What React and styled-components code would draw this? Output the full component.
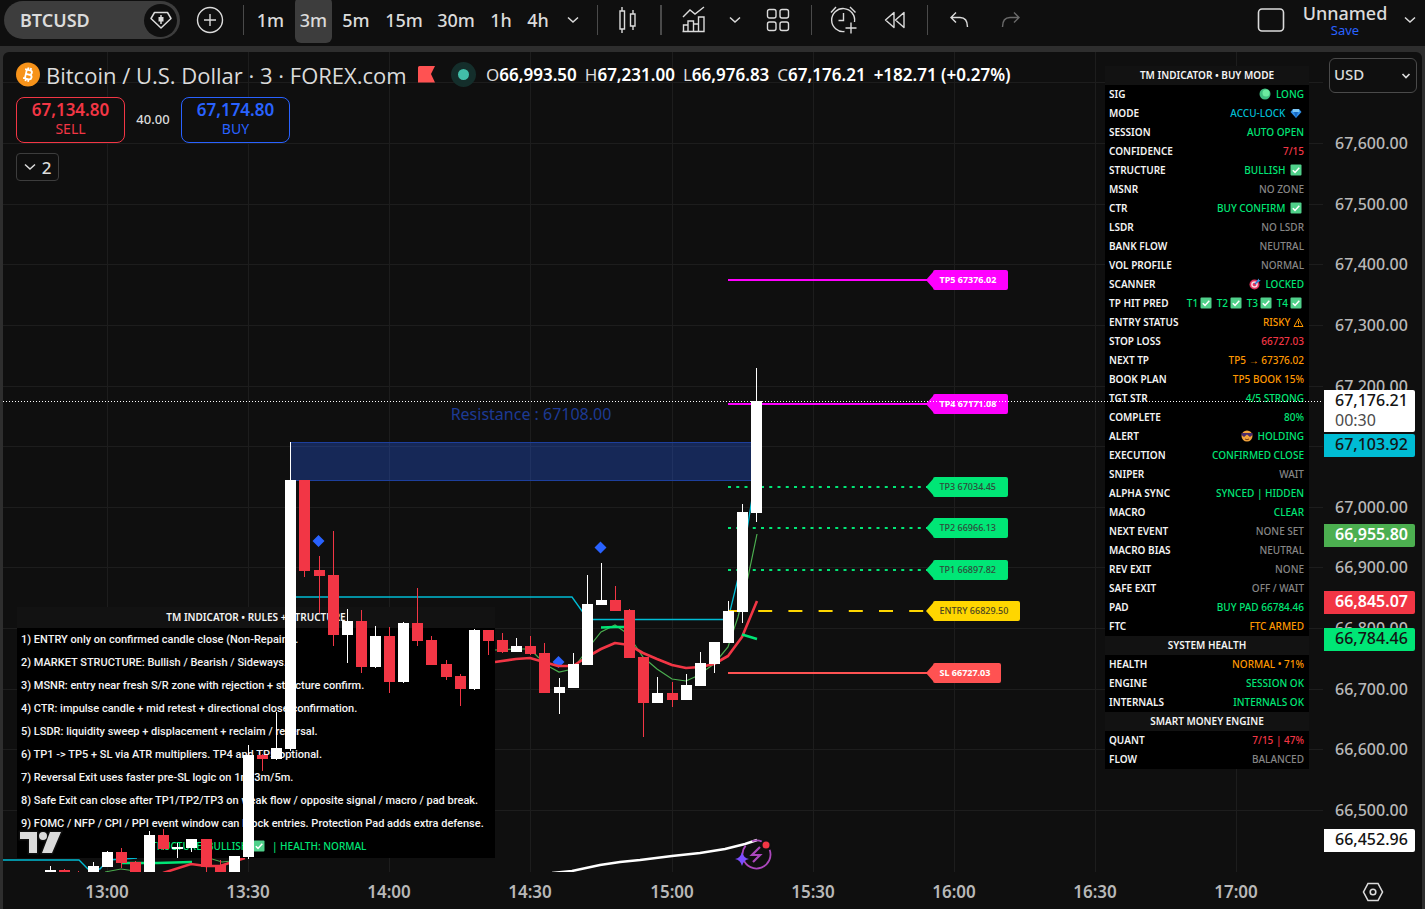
import React from "react";
import styled, { createGlobalStyle } from "styled-components";

const c = {
  bg: "#0f0f0f",
  frame: "#2e2e2e",
  hover: "#3d3d3d",
  text: "#dbdbdb",
  axis: "#b8b8b8",
  grid: "#1d1d1d",
  red: "#f23645",
  blue: "#2962ff",
  cyan: "#00bcd4",
  green: "#00e676",
  leaf: "#4caf50",
  orange: "#ff9800",
  magenta: "#ff00ff",
  yellow: "#ffd600",
  sl: "#ff5252",
  grey: "#787b86",
};

const Global = createGlobalStyle`
  * { box-sizing: border-box; }
  body {
    margin: 0;
    background: ${c.frame};
    color: ${c.text};
    font-family: "Noto Sans", "Open Sans", sans-serif;
  }
  button, select { font-family: inherit; color: inherit; }
`;

/* ---------- page frame ---------- */

const Page = styled.div`
  display: flex;
  flex-direction: column;
  min-height: 100vh;
`;

const Toolbar = styled.header`
  display: flex;
  align-items: center;
  height: 46px;
  padding: 0 0 6px 4px;
  background: ${c.bg};
`;

const SymbolPill = styled.div`
  display: flex;
  align-items: center;
  justify-content: space-between;
  width: 176px;
  height: 38px;
  padding: 0 3px 0 16px;
  border-radius: 19px;
  background: ${c.hover};
`;

const SymbolButton = styled.button`
  padding: 0;
  border: 0;
  background: none;
  font-size: 18px;
  font-weight: 600;
  line-height: 24px;
`;

const RoundButton = styled.button`
  display: grid;
  place-items: center;
  width: 33px;
  height: 33px;
  padding: 0;
  border: 0;
  border-radius: 50%;
  background: ${c.bg};
`;

const ToolButton = styled.button`
  display: grid;
  place-items: center;
  flex: none;
  width: ${(p) => p.$w}px;
  height: ${(p) => (p.$active ? 46 : 38)}px;
  padding: 0;
  border: 0;
  border-radius: 6px;
  background: ${(p) => (p.$active ? c.hover : "transparent")};
  color: ${(p) => (p.$dim ? "#6a6a6a" : c.text)};
  font-size: 18px;
  font-weight: 500;
  white-space: nowrap;
`;

const Separator = styled.span`
  flex: none;
  width: ${(p) => p.$w}px;
  height: 30px;
  background: linear-gradient(#4a4a4a, #4a4a4a) center / ${(p) => (p.$bold ? 2 : 1)}px 100% no-repeat;
`;

const Spacer = styled.span`
  flex: 1;
`;

const LayoutName = styled.div`
  display: flex;
  flex-direction: column;
  align-items: center;
  width: 100px;
  font-size: 18px;
  font-weight: 500;
  line-height: 20px;
`;

const SaveButton = styled.button`
  padding: 0;
  border: 0;
  background: none;
  color: ${c.blue};
  font-size: 13px;
  line-height: 14px;
`;

const Panel = styled.main`
  display: grid;
  flex: 1;
  grid-template-columns: minmax(0, 1fr) 99px;
  grid-template-rows: minmax(820px, 1fr) 37px;
  margin: 6px 3px 0;
  border-radius: 6px 6px 0 0;
  background: ${c.bg};
  overflow: hidden;
`;

/* ---------- plot layers ---------- */

const Plot = styled.div`
  display: grid;
  grid-template: minmax(0, 1fr) / minmax(0, 1fr);
  overflow: hidden;
  > * {
    grid-area: 1 / 1;
  }
`;

const Layer = styled.svg`
  width: 100%;
  height: 820px;
  pointer-events: none;
  font-family: inherit;
`;

const Legend = styled.div`
  display: flex;
  flex-direction: column;
  align-self: start;
  align-items: flex-start;
  gap: 10px;
  padding: 10px 0 0 13px;
`;

const TitleRow = styled.div`
  display: flex;
  align-items: center;
  height: 25px;
  white-space: nowrap;
`;

const Title = styled.h1`
  margin: 0 16px 0 6px;
  width: 356px;
  font-family: "Open Sans", "Noto Sans", sans-serif;
  font-size: 22px;
  font-weight: 400;
  line-height: 24px;
`;

const Ohlc = styled.div`
  display: flex;
  gap: 8px;
  margin-left: 10px;
  color: #fff;
  font-size: 17px;
  font-weight: 600;
  line-height: 24px;
`;

const OhlcKey = styled.span`
  color: ${c.text};
  font-weight: 400;
`;

const Status = styled.span`
  width: 25px;
  height: 25px;
  margin-left: 16px;
  border: 7px solid #142e2b;
  border-radius: 50%;
  background: #42bda8;
`;

const TradeRow = styled.div`
  display: flex;
  align-items: center;
`;

const TradeButton = styled.button`
  display: flex;
  flex-direction: column;
  align-items: center;
  justify-content: center;
  width: 109px;
  height: 46px;
  padding: 0 0 2px;
  border: 1px solid ${(p) => p.$color};
  border-radius: 8px;
  background: ${c.bg};
  color: ${(p) => p.$color};
  font-size: 14px;
  line-height: 19px;
  strong {
    font-size: 17px;
    font-weight: 600;
  }
`;

const Spread = styled.span`
  width: 56px;
  padding-bottom: 2px;
  font-size: 13px;
  font-weight: 500;
  text-align: center;
`;

const CountButton = styled.button`
  display: flex;
  align-items: center;
  justify-content: center;
  gap: 6px;
  width: 43px;
  height: 28px;
  padding: 0;
  border: 1px solid #3d3d3d;
  border-radius: 4px;
  background: ${c.bg};
  font-size: 17px;
  font-weight: 500;
`;

const StatsTable = styled.table`
  justify-self: end;
  align-self: start;
  width: 204px;
  margin: 14px 14px 0 0;
  border-collapse: collapse;
  background: #000;
  font-size: 10px;
  line-height: 19px;
  white-space: nowrap;
`;

const GroupHead = styled.th`
  height: 19px;
  padding: 0;
  background: #121212;
  color: #f4f4f4;
  font-weight: 600;
`;

const StatName = styled.th`
  height: 19px;
  padding: 0 0 0 4px;
  color: #f4f4f4;
  font-weight: 600;
  text-align: left;
`;

const StatValue = styled.td`
  height: 19px;
  padding: 0 5px 0 0;
  color: ${(p) => p.$color};
  font-weight: 500;
  text-align: right;
  svg {
    margin: 0 2px;
    vertical-align: -2px;
  }
`;

const Rules = styled.section`
  justify-self: start;
  align-self: start;
  width: 478px;
  margin: 555px 0 0 14px;
  background: #000;
  color: #f4f4f4;
  font-size: 11px;
  font-weight: 500;
  line-height: 23px;
  white-space: nowrap;
`;

const RulesHead = styled.h2`
  margin: 0;
  background: #121212;
  font-size: 10px;
  font-weight: 600;
  line-height: 21px;
  text-align: center;
`;

const RulesList = styled.ul`
  margin: 0;
  padding: 0 4px;
  font-family: Roboto, "Noto Sans", sans-serif;
  list-style: none;
`;

const RulesFoot = styled.p`
  margin: 0;
  color: ${c.green};
  font-size: 10px;
  text-align: center;
  svg {
    margin: 0 2px;
    vertical-align: -2px;
  }
`;

/* ---------- axes ---------- */

const PriceAxis = styled.aside`
  position: relative;
`;

const CurrencyBox = styled.label`
  display: grid;
  align-items: center;
  width: 88px;
  height: 35px;
  margin: 6px 0 0 6px;
  border: 1px solid #4a4a4a;
  border-radius: 6px;
  > * {
    grid-area: 1 / 1;
  }
  svg {
    justify-self: end;
    margin-right: 4px;
    pointer-events: none;
  }
`;

const CurrencySelect = styled.select`
  width: 100%;
  height: 100%;
  padding: 0 4px 4px;
  border: 0;
  appearance: none;
  background: transparent;
  font-size: 15px;
  font-weight: 500;
`;

const Tick = styled.span`
  position: absolute;
  left: 12px;
  margin-top: -13px;
  color: ${c.axis};
  font-size: 16px;
  font-weight: 500;
  line-height: 24px;
`;

const Badge = styled.div`
  position: absolute;
  left: 1px;
  width: 91px;
  margin-top: -11px;
  padding: 0 0 2px 11px;
  border-radius: 0 2px 2px 0;
  background: ${(p) => p.$bg};
  color: ${(p) => p.$fg};
  font-size: 16px;
  font-weight: ${(p) => (p.$fg === "#fff" ? 600 : 500)};
  line-height: ${(p) => (p.$tall ? 20 : 21)}px;
`;

const Countdown = styled.div`
  color: #4a4a4a;
  font-weight: 400;
`;

const TimeAxis = styled.footer`
  position: relative;
  overflow: hidden;
`;

const TimeTick = styled.span`
  position: absolute;
  top: 8px;
  width: 60px;
  margin-left: -30px;
  color: ${c.axis};
  font-size: 17px;
  font-weight: 600;
  line-height: 24px;
  text-align: center;
`;

const Corner = styled.button`
  display: grid;
  place-items: center;
  padding: 0;
  height: 40px;
  border: 0;
  background: none;
`;

/* ---------- icons ---------- */

const Svg = ({ w, h = w, children, sw = 1.4, ...rest }) => (
  <svg width={w} height={h} viewBox={`0 0 ${w} ${h}`} fill="none" stroke="currentColor" strokeWidth={sw} aria-hidden="true" {...rest}>
    {children}
  </svg>
);

const Chevron = () => (
  <Svg w={12} h={8} sw={1.5}><path d="M1 1.500 6 6l5-4.500" /></Svg>
);
const DiamondIcon = () => (
  <Svg w={24} h={20} sw={1.5}>
    <path d="M5.500 2.500h13l3.500 6L12 18 2 8.500z" strokeLinejoin="round" />
    <path d="M12 5v9" /><path d="M9.500 7h5v4.500h-5z" fill="currentColor" stroke="none" />
  </Svg>
);
const PlusIcon = () => (
  <Svg w={28}><circle cx="14" cy="14" r="12.500" /><path d="M8 14h12M14 8v12" /></Svg>
);
const CandlesIcon = () => (
  <Svg w={20} h={28}><path d="M4 1v4M4 23v4M2 5h4.500v18H2zM15 4v4M15 20v4M12.500 8H17v12h-4.500z" /></Svg>
);
const IndicatorsIcon = () => (
  <Svg w={26} h={28}>
    <path d="M2 11l7-7 5 4 9-7" />
    <path d="M2.500 25.500V19H7v6.500M7 25.500V15h5.500v10.500M12.500 25.500V18h5v7.500M17.500 25.500V11H23v14.500zM1.500 25.500h22" />
  </Svg>
);
const LayoutsIcon = () => (
  <Svg w={24}>
    {[[1.5, 1.5], [14, 1.5], [1.5, 14], [14, 14]].map(([x, y]) => (
      <rect key={`${x}-${y}`} x={x} y={y} width="8.500" height="8.500" rx="2" />
    ))}
  </Svg>
);
const AlarmIcon = () => (
  <Svg w={30}>
    <path d="M15.500 26.500A11.500 11.500 0 1 1 25.500 17" />
    <path d="M9.500 15.500h5V8M2 7.500 7 2M21 2l5.500 5.500M22 17.500v11M16.500 23h11" />
  </Svg>
);
const RewindIcon = () => (
  <Svg w={22} h={18}><path d="M10 1.500v15L1.500 9zM20 1.500v15L11.500 9z" strokeLinejoin="round" /></Svg>
);
const UndoIcon = ({ flip }) => (
  <Svg w={20} h={18} transform={flip ? "scale(-1 1)" : undefined}>
    <path d="M7 1.500 2 6.500l5 5M2 6.500h9c5 0 7.500 4 7.500 9.500" />
  </Svg>
);
const FrameIcon = () => (
  <Svg w={28} h={26} sw={1.6}><rect x="1.500" y="2" width="25" height="22" rx="3.500" /></Svg>
);
const HexIcon = () => (
  <Svg w={22} h={20} sw={1.6}><path d="M6 1.500h10L20.500 10 16 18.500H6L1.500 10z" /><circle cx="11" cy="10" r="2.800" /></Svg>
);
const BitcoinIcon = () => (
  <svg width="24" height="25" viewBox="0 0 24 24" aria-hidden="true">
    <circle cx="12" cy="12" r="12" fill="#f7931a" />
    <g transform="rotate(13 12 12)" fill="none" stroke="#fff">
      <path d="M8 7.500h5.200a2.200 2.200 0 0 1 0 4.400H9.800M9.800 7.500v9M9.800 11.900h4a2.300 2.300 0 0 1 0 4.600H8M11 5v2.500M13.600 5v2.500M11 16.500V19M13.600 16.500V19" strokeWidth="1.800" />
    </g>
  </svg>
);
const FlagIcon = () => (
  <svg width="17" height="17" viewBox="0 0 17 17" aria-hidden="true"><path d="M1.500 0H17l-4 8 4 8.500H0V1.500Q0 0 1.500 0z" fill="#ff5252" /></svg>
);

const Check = () => (
  <svg width="12" height="12" viewBox="0 0 12 12" role="img" aria-label="yes">
    <rect x="0.500" y="0.500" width="11" height="11" rx="1" fill="#4fd08a" />
    <path d="M2.800 6.200 5 8.400l4.300-4.700" fill="none" stroke="#fff" strokeWidth="1.500" />
  </svg>
);
const Dot = () => (
  <svg width="12" height="12" viewBox="0 0 12 12" role="img" aria-label="green">
    <circle cx="6" cy="6" r="5.500" fill="#3fbf80" /><circle cx="7" cy="5" r="3.500" fill="#6bea9f" />
  </svg>
);
const Gem = () => (
  <svg width="12" height="12" viewBox="0 0 12 12" role="img" aria-label="gem">
    <path d="M3 2h6l2.500 3L6 11 .5 5z" fill="#2f8fe8" /><path d="M3 2h6l.5 3h-7z" fill="#7cc7f5" /><path d="M4 5h4l-2 6z" fill="#1668c4" />
  </svg>
);
const Target = () => (
  <svg width="12" height="12" viewBox="0 0 12 12" role="img" aria-label="target">
    <circle cx="5.500" cy="6.500" r="5" fill="#e0315c" /><circle cx="5.500" cy="6.500" r="3.300" fill="#f5d5de" />
    <circle cx="5.500" cy="6.500" r="1.800" fill="#e0315c" /><path d="M6 6l4-4" stroke="#1d7fd6" strokeWidth="1.500" /><path d="M8 3l1.500-2.500L10 2l1.800.5L9.500 4z" fill="#3d9bea" />
  </svg>
);
const Cool = () => (
  <svg width="12" height="12" viewBox="0 0 12 12" role="img" aria-label="cool">
    <circle cx="6" cy="6" r="5.500" fill="#f2a33c" /><path d="M.5 3h11v2L9 7 6 4.500 3 7 .5 5z" fill="#4a2b6b" /><path d="M4 9q2 1.500 4 0" stroke="#7a3b12" fill="none" />
  </svg>
);
const WarnIcon = styled.svg`
  && {
    margin: 0;
  }
`;
const Warn = () => (
  <WarnIcon width="11" height="11" viewBox="0 0 11 11" fill="none" stroke="currentColor" role="img" aria-label="warning">
    <path d="M5.500 1.500 10 9.500H1zM5.500 4v3M5.500 7.800v1" />
  </WarnIcon>
);

/* ---------- data ---------- */

const LEFT = 3;
const TOP = 52;
const yOf = (price) => 144 + (67600 - price) * 0.6064;
const times = ["13:00", "13:30", "14:00", "14:30", "15:00", "15:30", "16:00", "16:30", "17:00"];
const timeX = (i) => Math.round(107 + i * 141.15);
const prices = [67600, 67500, 67400, 67300, 67200, 67100, 67000, 66900, 66800, 66700, 66600, 66500];
const fmt = (n) => n.toLocaleString("en-US", { minimumFractionDigits: 2 });

// x, up, body top, body bottom, wick top, wick bottom
const candles = [
  [50, 1, 870, 874, 866, 874], [64, 0, 870, 874, 869, 874], [78, 0, 872, 874, 871, 874],
  [93, 1, 866, 874, 862, 874], [107, 1, 852, 867, 851, 867], [121, 0, 852, 863, 848, 868],
  [135, 0, 862, 874, 861, 874], [149, 1, 835, 874, 831, 874], [163, 0, 835, 849, 829, 850],
  [177, 1, 847, 849, 843, 858], [191, 1, 839, 848, 839, 852], [206, 0, 839, 867, 839, 874],
  [220, 0, 865, 874, 860, 874], [234, 1, 856, 874, 856, 874], [248, 1, 755, 857, 745, 859],
  [262, 0, 755, 759, 754, 771], [276, 1, 748, 759, 712, 760], [290, 1, 480, 749, 442, 751],
  [304, 0, 480, 571, 480, 577], [319, 0, 570, 576, 556, 613], [333, 0, 575, 635, 531, 646],
  [347, 1, 621, 635, 609, 663], [361, 0, 621, 667, 610, 673], [375, 1, 636, 667, 626, 668],
  [389, 0, 636, 682, 627, 693], [403, 1, 623, 682, 622, 683], [417, 0, 623, 641, 588, 646],
  [431, 0, 640, 665, 636, 665], [446, 0, 664, 677, 660, 680], [460, 0, 676, 689, 674, 706],
  [474, 1, 630, 689, 629, 690], [488, 0, 630, 641, 630, 655], [502, 0, 640, 652, 633, 653],
  [516, 1, 646, 652, 638, 652], [530, 0, 646, 654, 636, 655], [544, 0, 653, 693, 643, 693],
  [559, 1, 687, 693, 678, 714], [573, 1, 664, 688, 653, 688], [587, 1, 604, 665, 575, 665],
  [601, 1, 600, 605, 563, 605], [615, 0, 600, 611, 586, 611], [629, 0, 610, 658, 609, 658],
  [643, 0, 657, 703, 657, 737], [657, 1, 693, 703, 677, 703], [672, 0, 693, 700, 682, 707],
  [686, 1, 685, 700, 674, 700], [700, 1, 663, 686, 652, 686], [714, 1, 642, 664, 642, 673],
  [728, 1, 611, 643, 601, 643], [742, 1, 512, 612, 504, 623], [756, 1, 401, 513, 368, 522],
];

// label, y, colour, label width, text colour, dash pattern
const levels = [
  ["TP5 67376.02", 280, c.magenta, 75, "#fff", null],
  ["TP4 67171.08", 404, c.magenta, 75, "#fff", null],
  ["TP3 67034.45", 487, c.green, 75, "#2f4a3b", "3 5.250"],
  ["TP2 66966.13", 528, c.green, 75, "#2f4a3b", "3 5.250"],
  ["TP1 66897.82", 570, c.green, 75, "#2f4a3b", "3 5.250"],
  ["ENTRY 66829.50", 611, c.yellow, 87, "#4a4420", "14 16.200"],
  ["SL 66727.03", 673, c.sl, 68, "#fff", null],
];

const badges = [
  [67103.92, c.cyan, "#131313"],
  [66955.8, c.leaf, "#fff"],
  [66845.07, c.red, "#fff"],
  [66784.46, c.green, "#131313"],
  [66452.96, "#fff", "#131313"],
];

const G = c.green, O = c.orange, R = c.red, N = "#868686";
const stats = [
  { title: "TM INDICATOR • BUY MODE" },
  ["SIG", <><Dot /> LONG</>, G], ["MODE", <>ACCU-LOCK <Gem /></>, c.cyan], ["SESSION", "AUTO OPEN", G],
  ["CONFIDENCE", "7/15", R], ["STRUCTURE", <>BULLISH <Check /></>, G], ["MSNR", "NO ZONE", N],
  ["CTR", <>BUY CONFIRM <Check /></>, G], ["LSDR", "NO LSDR", N], ["BANK FLOW", "NEUTRAL", N],
  ["VOL PROFILE", "NORMAL", N], ["SCANNER", <><Target /> LOCKED</>, G],
  ["TP HIT PRED", <>T1<Check /> T2<Check /> T3<Check /> T4<Check /></>, G],
  ["ENTRY STATUS", <>RISKY <Warn /></>, O], ["STOP LOSS", "66727.03", R], ["NEXT TP", "TP5 → 67376.02", O],
  ["BOOK PLAN", "TP5 BOOK 15%", O], ["TGT STR", "4/5 STRONG", G], ["COMPLETE", "80%", G],
  ["ALERT", <><Cool /> HOLDING</>, G], ["EXECUTION", "CONFIRMED CLOSE", G], ["SNIPER", "WAIT", N],
  ["ALPHA SYNC", "SYNCED | HIDDEN", G], ["MACRO", "CLEAR", G], ["NEXT EVENT", "NONE SET", N],
  ["MACRO BIAS", "NEUTRAL", N], ["REV EXIT", "NONE", N], ["SAFE EXIT", "OFF / WAIT", N],
  ["PAD", "BUY PAD 66784.46", G], ["FTC", "FTC ARMED", O],
  { title: "SYSTEM HEALTH" },
  ["HEALTH", "NORMAL • 71%", O], ["ENGINE", "SESSION OK", G], ["INTERNALS", "INTERNALS OK", G],
  { title: "SMART MONEY ENGINE" },
  ["QUANT", "7/15 | 47%", R], ["FLOW", "BALANCED", N],
];

const rules = [
  "1) ENTRY only on confirmed candle close (Non-Repaint).",
  "2) MARKET STRUCTURE: Bullish / Bearish / Sideways.",
  "3) MSNR: entry near fresh S/R zone with rejection + structure confirm.",
  "4) CTR: impulse candle + mid retest + directional close confirmation.",
  "5) LSDR: liquidity sweep + displacement + reclaim / reversal.",
  "6) TP1 -> TP5 + SL via ATR multipliers. TP4 and TP5 optional.",
  "7) Reversal Exit uses faster pre-SL logic on 1m/3m/5m.",
  "8) Safe Exit can close after TP1/TP2/TP3 on weak flow / opposite signal / macro / pad break.",
  "9) FOMC / NFP / CPI / PPI event window can block entries. Protection Pad adds extra defense.",
];

/* ---------- chart layers ---------- */

const Studies = () => (
  <Layer aria-hidden="true">
    <g transform={`translate(${-LEFT} ${-TOP})`} fill="none">
      <g stroke={c.grid}>
        {[67700, ...prices].map((p) => {
          const y = Math.round(yOf(p)) - 0.5;
          return <line key={p} x1="3" x2="4000" y1={y} y2={y} />;
        })}
        {times.map((t, i) => <line key={t} x1={timeX(i) + 0.5} x2={timeX(i) + 0.5} y1="52" y2="872" />)}
      </g>
      <rect x="290.500" y="442.500" width="466" height="38" fill="#2962ff" fillOpacity="0.3" stroke="#1d3f9c" />
      <path d="M295 597H572l16 22.500H728L742 562l15-95" stroke={c.cyan} strokeWidth="1.300" />
      <path d="M3 860H79l9 9h12l8-9 29-2" stroke={c.cyan} strokeWidth="1.300" />
      <path d="M105 872l16-3 14 2M212 859l10 3 18-2" stroke={c.leaf} />
      <path d="M122 863h35l35-1" stroke={c.green} strokeWidth="2.500" />
      <path d="M163 873l28-9 15 2h14l25-8" stroke={c.red} strokeWidth="2.500" />
      <path d="M552 873l20-2 28-6 20-3 20-2 32-4 28-3 25-4 20-5 12-4" stroke="#fff" strokeWidth="2.500" />
      <path d="M558.500 656l6 6-6 6-6-6z" fill={c.blue} />
      <path d="M495 650l21-1h14l8 8 10 9 11 6 14-3 20-27 8-10 14-7 10 7 10 13 8 12 14 12 15 10 14 2 11-5 17-12 14-17 10-30 10-40 9-43" stroke={c.leaf} strokeWidth="1.200" />
      <path d="M495 662l21-3 14-1 14 4 14 4 15 0 14-9 14-8 14-6 14 2 14 8 14 6 15 6 14 3 14-1 14-3 14-8 14-19 15-36" stroke={c.red} strokeWidth="2.600" strokeLinejoin="round" />
      <path d="M601 627.500l14-.5h12M742 634.500l15 4.500" stroke={c.green} strokeWidth="2.500" />
      <path d="M318.500 535l6 6-6 6-6-6zM600.500 541.500l6 6-6 6-6-6z" fill={c.blue} />
      {levels.map(([name, y, color, , , dash]) => (
        <line key={name} x1="728" x2="927" y1={y} y2={y} stroke={color} strokeWidth="2" strokeDasharray={dash || undefined} />
      ))}
      <text x="531" y="420" fill="#1d3a94" fontSize="16" textAnchor="middle">Resistance : 67108.00</text>
    </g>
  </Layer>
);

const Candles = () => (
  <Layer role="img" aria-label="BTCUSD candles">
    <g transform={`translate(${-LEFT} ${-TOP})`}>
      <path d="M20 832h17v21h-8v-14h-9zM39 836a4 4 0 1 1 8 0 4 4 0 0 1-8 0zM50 832h11l-9 21H42z" fill="#dbdbdb" stroke={c.bg} strokeWidth="3" paintOrder="stroke" />
      {candles.map(([x, up, bt, bb, wt, wb]) => (
        <g key={x} fill={up ? "#fff" : c.red}>
          <rect x={x} y={wt} width="1" height={wb - wt} />
          <rect x={x - 5} y={bt} width="11" height={bb - bt} />
        </g>
      ))}
      {levels.map(([name, y, color, w, fg]) => (
        <g key={name}>
          <path d={`M926 ${y}l7-8q0-2 2-2h${w - 4}q2 0 2 2v16q0 2-2 2h${4 - w}q-2 0-2-2z`} fill={color} />
          <text x="939.500" y={y + 3} fill={fg} fontSize="9" fontWeight={fg === "#fff" ? 700 : 500}>{name}</text>
        </g>
      ))}
      <line x1="3" x2="4000" y1="401.500" y2="401.500" stroke="#fff" strokeDasharray="1 2" />
      <g fill="none" stroke="#ab47bc" strokeWidth="1.800">
        <circle cx="756.500" cy="854.500" r="14" strokeDasharray="58 8 10 12" transform="rotate(-20 756.500 854.500)" />
        <path d="M760 847l-8 8h8l-7 7" strokeWidth="2.200" />
      </g>
      <circle cx="766" cy="845" r="5.500" fill={c.bg} />
      <circle cx="766" cy="845" r="3.500" fill={c.red} />
      <path d="M742 852q1.500 6 7 7-5.500 1-7 7-1.500-6-7-7 5.500-1 7-7z" fill="#7c4dff" />
    </g>
  </Layer>
);

const Intervals = [["1m", 49], ["3m", 37, true], ["5m", 48], ["15m", 48], ["30m", 56], ["1h", 34], ["4h", 40]];

export default function App() {
  return (
    <Page>
      <Global />
      <Toolbar>
        <SymbolPill>
          <SymbolButton>BTCUSD</SymbolButton>
          <RoundButton aria-label="Chart type"><DiamondIcon /></RoundButton>
        </SymbolPill>
        <ToolButton $w={60} aria-label="Add symbol"><PlusIcon /></ToolButton>
        <Separator $w={6} />
        {Intervals.map(([label, w, active]) => (
          <ToolButton key={label} $w={w} $active={active}>{label}</ToolButton>
        ))}
        <ToolButton $w={30} aria-label="More intervals"><Chevron /></ToolButton>
        <Separator $w={18} />
        <ToolButton $w={44} aria-label="Candles"><CandlesIcon /></ToolButton>
        <Separator $w={22} $bold />
        <ToolButton $w={44} aria-label="Indicators"><IndicatorsIcon /></ToolButton>
        <ToolButton $w={38} aria-label="Favourites"><Chevron /></ToolButton>
        <ToolButton $w={48} aria-label="Layouts"><LayoutsIcon /></ToolButton>
        <Separator $w={18} />
        <ToolButton $w={48} aria-label="Create alert"><AlarmIcon /></ToolButton>
        <ToolButton $w={54} aria-label="Replay"><RewindIcon /></ToolButton>
        <Separator $w={10} />
        <ToolButton $w={54} aria-label="Undo"><UndoIcon /></ToolButton>
        <ToolButton $w={50} $dim aria-label="Redo"><UndoIcon flip /></ToolButton>
        <Spacer />
        <ToolButton $w={48} aria-label="Layout setup"><FrameIcon /></ToolButton>
        <LayoutName>
          Unnamed
          <SaveButton>Save</SaveButton>
        </LayoutName>
        <ToolButton $w={30} aria-label="Manage layouts"><Chevron /></ToolButton>
      </Toolbar>

      <Panel>
        <Plot>
          <Studies />
          <StatsTable>
            <tbody>
              {stats.map((row) =>
                row.title ? (
                  <tr key={row.title}><GroupHead colSpan={2}>{row.title}</GroupHead></tr>
                ) : (
                  <tr key={row[0]}>
                    <StatName scope="row">{row[0]}</StatName>
                    <StatValue $color={row[2]}>{row[1]}</StatValue>
                  </tr>
                )
              )}
            </tbody>
          </StatsTable>
          <Rules>
            <RulesHead>TM INDICATOR • RULES + STRUCTURE</RulesHead>
            <RulesList>{rules.map((r) => <li key={r}>{r}</li>)}</RulesList>
            <RulesFoot>STRUCTURE: BULLISH <Check /> &nbsp;| HEALTH: NORMAL</RulesFoot>
          </Rules>
          <Candles />
          <Legend>
            <TitleRow>
              <BitcoinIcon />
              <Title>Bitcoin / U.S. Dollar · 3 · FOREX.com</Title>
              <FlagIcon />
              <Status />
              <Ohlc>
                <span><OhlcKey>O</OhlcKey>66,993.50</span>
                <span><OhlcKey>H</OhlcKey>67,231.00</span>
                <span><OhlcKey>L</OhlcKey>66,976.83</span>
                <span><OhlcKey>C</OhlcKey>67,176.21</span>
                <span>+182.71 (+0.27%)</span>
              </Ohlc>
            </TitleRow>
            <TradeRow>
              <TradeButton $color={c.red}><strong>67,134.80</strong>SELL</TradeButton>
              <Spread>40.00</Spread>
              <TradeButton $color={c.blue}><strong>67,174.80</strong>BUY</TradeButton>
            </TradeRow>
            <CountButton><Chevron />2</CountButton>
          </Legend>
        </Plot>

        <PriceAxis>
          <CurrencyBox>
            <CurrencySelect aria-label="Currency" defaultValue="USD"><option>USD</option></CurrencySelect>
            <Svg w={12} h={8} sw={1.7}><path d="M2.500 2 6 5.500 9.500 2" /></Svg>
          </CurrencyBox>
          {prices.filter((p) => p !== 67100).map((p) => (
            <Tick key={p} style={{ top: Math.round(yOf(p)) - TOP }}>{fmt(p)}</Tick>
          ))}
          <Badge $bg="#fff" $fg="#131313" $tall style={{ top: Math.round(yOf(67176.21)) - TOP }}>
            67,176.21
            <Countdown>00:30</Countdown>
          </Badge>
          {badges.map(([p, bg, fg]) => (
            <Badge key={p} $bg={bg} $fg={fg} style={{ top: Math.round(yOf(p)) - TOP }}>{fmt(p)}</Badge>
          ))}
        </PriceAxis>

        <TimeAxis>
          {times.map((t, i) => <TimeTick key={t} style={{ left: timeX(i) - LEFT }}>{t}</TimeTick>)}
        </TimeAxis>
        <Corner aria-label="Axis settings"><HexIcon /></Corner>
      </Panel>
    </Page>
  );
}
